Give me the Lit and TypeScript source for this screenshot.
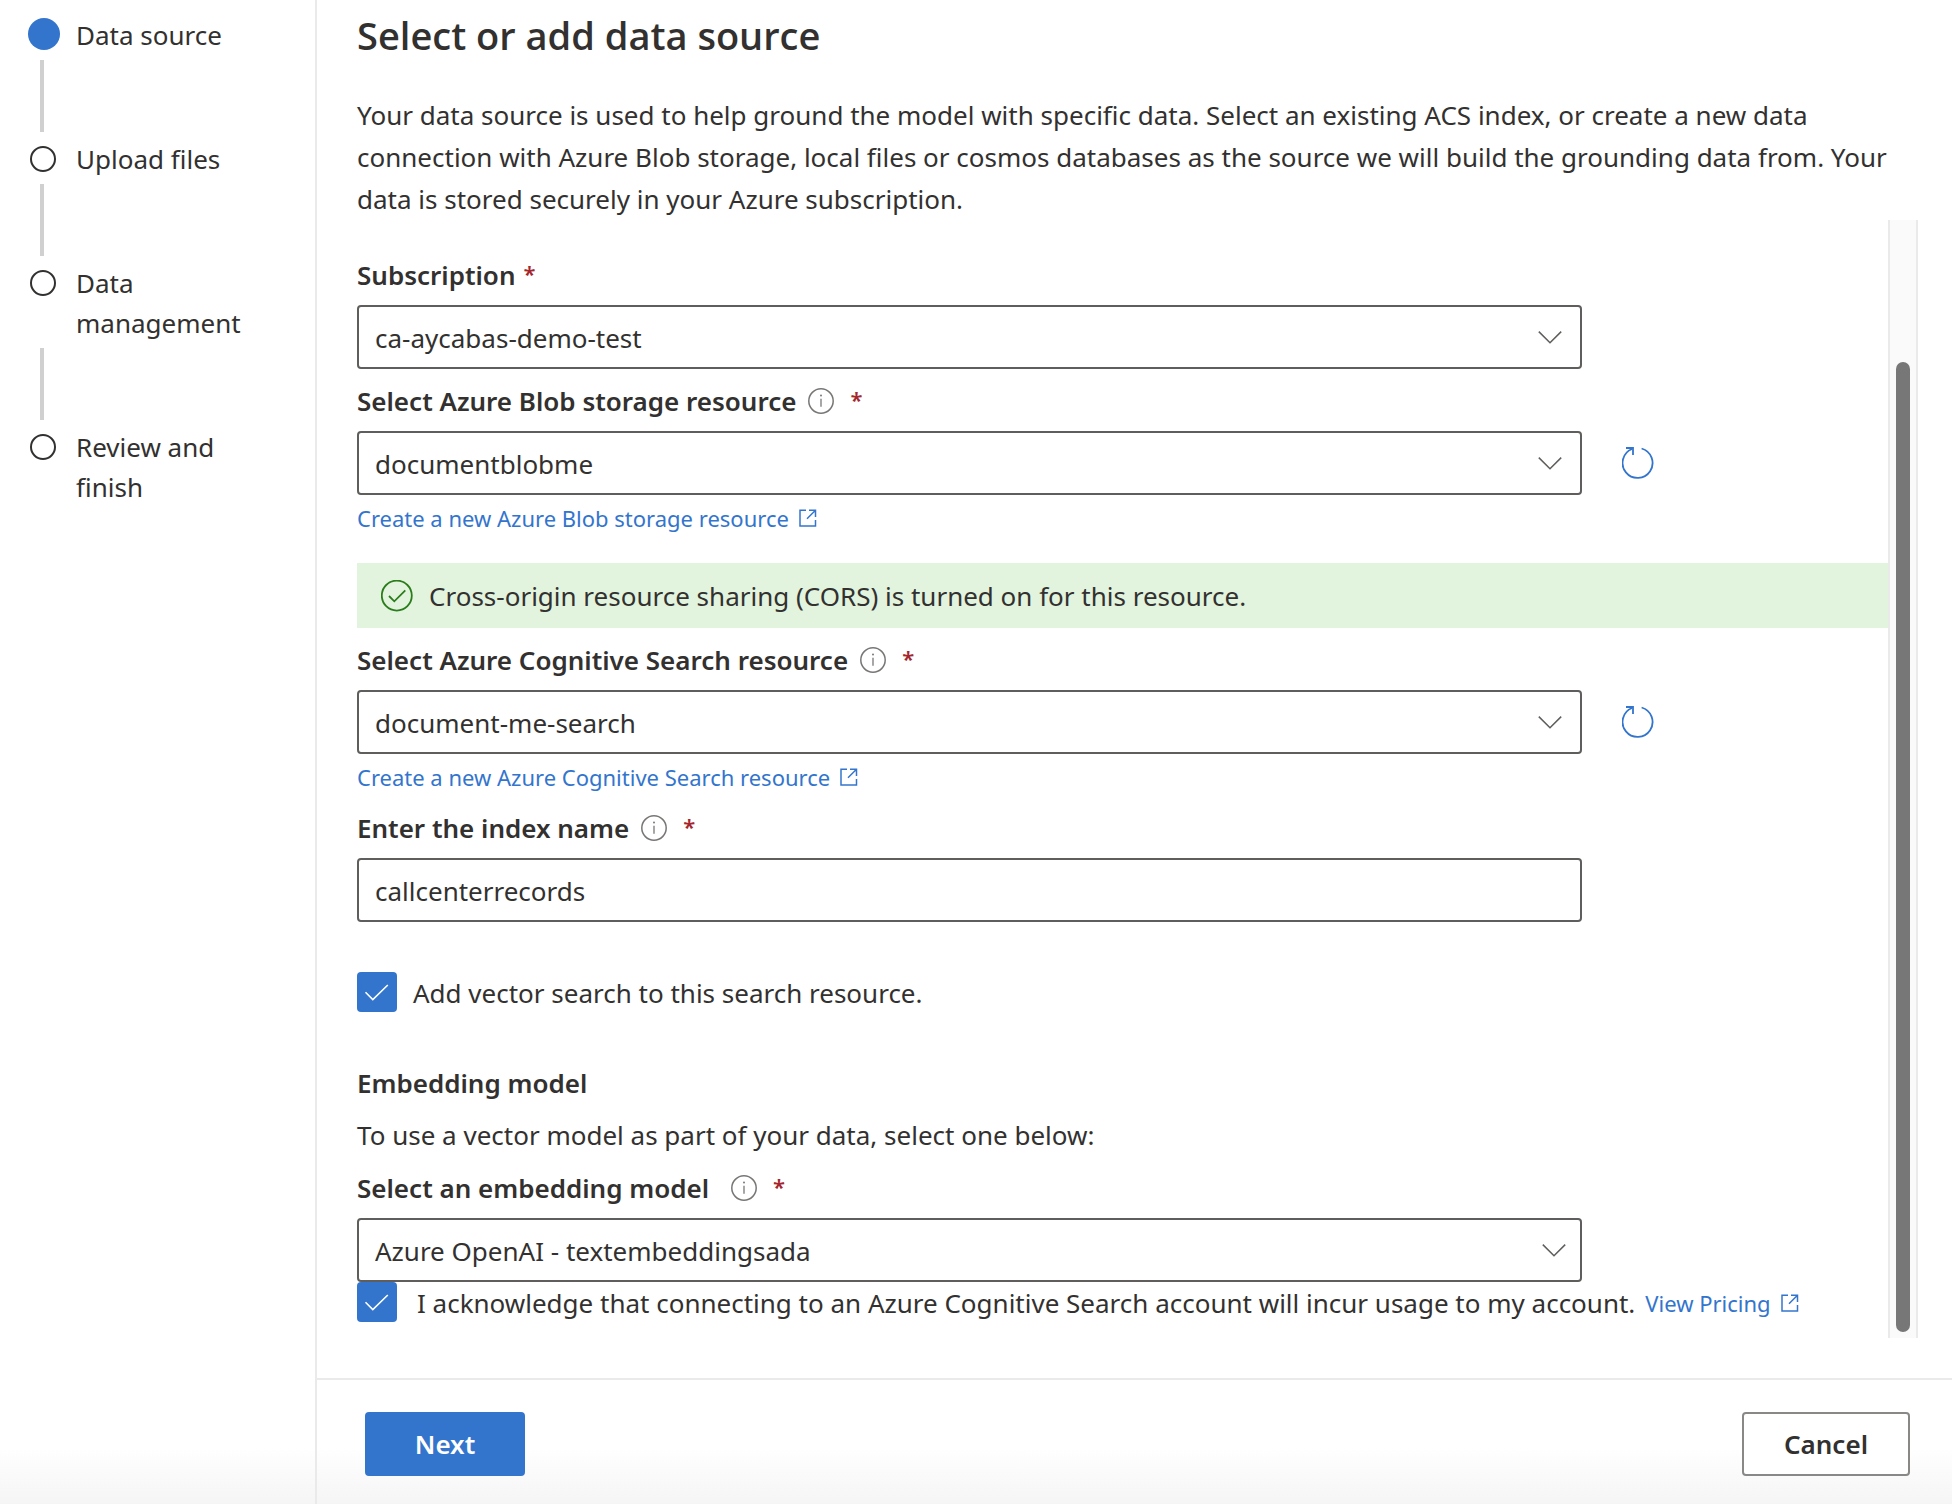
import { LitElement, html, css, nothing } from "lit";
import { customElement } from "lit/decorators.js";

const infoIcon = html`<svg class="info" viewBox="0 0 26 26" aria-hidden="true">
  <circle cx="13" cy="13" r="12.2" fill="none" stroke="#797775" stroke-width="1.5" />
  <path d="M13 10.8V18.8" stroke="#797775" stroke-width="1.3" />
  <circle cx="13" cy="7.6" r="1" fill="#797775" />
</svg>`;

const externalIcon = html`<svg class="external" viewBox="0 0 18 18" aria-hidden="true">
  <path d="M7 1.3H1V17H16.5V11M10 1.3H16.5V8M16.5 1.3L8 9.8" fill="none" stroke="currentColor" stroke-width="1.5" />
</svg>`;

const chevronIcon = (modifier: string) => html`<svg class="chevron ${modifier}" viewBox="0 0 24 13" aria-hidden="true">
  <path d="M.8 .6L12 11.8L23.2 .6" fill="none" stroke="#605e5c" stroke-width="1.5" />
</svg>`;

const refreshIcon = html`<svg class="refresh-icon" viewBox="0 0 32 32" aria-hidden="true">
  <path d="M20.2 1.5A15 15 0 1 1 10.6 2" fill="none" stroke="currentColor" stroke-width="1.8" transform="translate(-.6 0)" />
  <path d="M4 1H11V8" fill="none" stroke="currentColor" stroke-width="1.8" />
</svg>`;

const successIcon = html`<svg class="success-icon" viewBox="0 0 32 32" aria-hidden="true">
  <circle cx="15.8" cy="15.6" r="15" fill="none" stroke="#2b7d1c" stroke-width="1.8" />
  <path d="M8 16L13.3 21.3L24.3 10.3" fill="none" stroke="#2b7d1c" stroke-width="1.8" />
</svg>`;

const tickIcon = html`<svg class="tick" viewBox="0 0 40 40" aria-hidden="true">
  <path d="M8.5 20.3L15.8 27.6L30.8 13" fill="none" stroke="#fff" stroke-width="1.6" />
</svg>`;

interface FieldSpec {
  id: string;
  label: string;
  value: string;
  info?: boolean;
  refresh?: boolean;
  link?: string;
  wide?: boolean;
}

const steps = ["Data source", "Upload files", "Data management", "Review and finish"];

@customElement("app-root")
export class AppRoot extends LitElement {
  static styles = css`
    :host {
      display: block;
      font-family: "Noto Sans", "Open Sans", sans-serif;
      font-size: 26px;
      line-height: 42px;
      color: #323130;
    }
    * {
      box-sizing: border-box;
    }
    h1,
    h2,
    p,
    ol {
      margin: 0;
      padding: 0;
    }
    svg {
      display: block;
      flex: none;
    }
    .wizard {
      display: grid;
      grid-template-columns: 317px minmax(0, 1fr);
      min-height: 100vh;
      background: linear-gradient(to top, #f5f5f5, #fff 56px);
    }
    .steps {
      border-right: 2px solid #eaeaea;
      padding: 15px 48px 0 28px;
      list-style: none;
      line-height: 40px;
    }
    .step {
      display: grid;
      grid-template-columns: 32px 1fr;
      column-gap: 16px;
    }
    .dot {
      width: 26px;
      height: 26px;
      margin: 7px 2px;
      border: 2px solid #323130;
      border-radius: 50%;
    }
    .step.current .dot {
      width: 32px;
      height: 32px;
      margin: 3px 0;
      border: 0;
      background: #3375cd;
    }
    .step:not(:last-child)::after {
      content: "";
      width: 4px;
      height: 72px;
      margin: 5px 12px 7px;
      background: #d0d0d0;
    }
    .main {
      display: flex;
      flex-direction: column;
    }
    .intro {
      padding: 9px 34px 0 40px;
    }
    .title {
      font-family: "Open Sans", "Noto Sans", sans-serif;
      font-size: 38px;
      line-height: 52px;
      font-weight: 600;
      margin-bottom: 33px;
    }
    .scroll {
      flex: 1;
      display: flex;
      margin: 0 34px 40px 40px;
    }
    .form {
      flex: 1;
      min-width: 0;
      padding-top: 23px;
    }
    .track {
      display: flex;
      width: 30px;
      padding: 142px 6px 6px;
      border: solid #eaeaea;
      border-width: 0 2px;
      background: #fafafa;
    }
    .thumb {
      flex: 1;
      border-radius: 7px;
      background: #777;
    }
    .label-row {
      display: flex;
      align-items: center;
      gap: 8px;
      padding: 11px 0 9px;
      font-weight: 600;
    }
    .info {
      width: 26px;
      height: 26px;
      margin: 0 8px 0 4px;
    }
    .wide .info {
      margin-left: 14px;
    }
    .required {
      align-self: flex-start;
      color: #a4262c;
      font-size: 22px;
      line-height: 38px;
    }
    .control-row {
      display: flex;
      align-items: center;
      gap: 40px;
    }
    .box {
      display: grid;
      flex: 0 0 80%;
      align-items: center;
    }
    .control {
      grid-area: 1 / 1;
      appearance: none;
      width: 100%;
      height: 64px;
      margin: 0;
      padding: 2px 60px 0 16px;
      border: 2px solid #605e5c;
      border-radius: 4px;
      background: #fff;
      color: inherit;
      font: inherit;
    }
    .chevron {
      grid-area: 1 / 1;
      justify-self: end;
      width: 24px;
      height: 13px;
      margin: 0 20px 0 0;
      pointer-events: none;
    }
    .chevron.wide {
      margin-right: 16px;
    }
    .refresh {
      padding: 0;
      border: 0;
      background: none;
      color: #3375cd;
    }
    .refresh-icon,
    .success-icon {
      width: 32px;
      height: 32px;
    }
    .link {
      display: flex;
      align-items: center;
      gap: 10px;
      width: fit-content;
      color: #3375cd;
      font-size: 22px;
      text-decoration: none;
    }
    .control-row + .link {
      padding-top: 4px;
      line-height: 38px;
    }
    .external {
      width: 18px;
      height: 18px;
    }
    .banner {
      display: flex;
      align-items: center;
      gap: 16px;
      height: 65px;
      margin-top: 26px;
      padding-left: 24px;
      background: #e2f4de;
    }
    .check-row {
      display: flex;
      align-items: flex-start;
      gap: 16px;
      height: 42px;
    }
    .check {
      display: grid;
      flex: none;
    }
    .checkbox {
      grid-area: 1 / 1;
      appearance: none;
      width: 40px;
      height: 40px;
      margin: 0;
      border-radius: 4px;
      background: #3375cd;
    }
    .tick {
      grid-area: 1 / 1;
      width: 40px;
      height: 40px;
      pointer-events: none;
    }
    .vector {
      margin: 50px 0 48px;
    }
    .ack {
      column-gap: 10px;
    }
    .ack label {
      padding-left: 10px;
    }
    .subtitle {
      font-size: 26px;
      line-height: 42px;
      font-weight: 600;
      margin-bottom: 10px;
    }
    .footer {
      display: flex;
      justify-content: space-between;
      padding: 32px 42px 28px 48px;
      border-top: 2px solid #eaeaea;
    }
    .button {
      height: 64px;
      padding: 0 40px;
      border: 2px solid #8a8886;
      border-radius: 4px;
      background: #fff;
      color: inherit;
      font: inherit;
      font-weight: 600;
    }
    .button.primary {
      min-width: 160px;
      border-color: #3375cd;
      background: #3375cd;
      color: #fff;
    }
  `;

  private label(f: FieldSpec) {
    return html`<div class="label-row ${f.wide ? "wide" : ""}">
      <label for=${f.id}>${f.label}</label>${f.info ? infoIcon : nothing}<span class="required">*</span>
    </div>`;
  }

  private dropdown(f: FieldSpec) {
    return html`${this.label(f)}
      <div class="control-row">
        <div class="box">
          <select class="control" id=${f.id}>
            <option selected>${f.value}</option>
          </select>
          ${chevronIcon(f.wide ? "wide" : "")}
        </div>
        ${f.refresh
          ? html`<button class="refresh" type="button" aria-label="Refresh">${refreshIcon}</button>`
          : nothing}
      </div>
      ${f.link ? html`<a class="link" href="#">${f.link}${externalIcon}</a>` : nothing}`;
  }

  private textbox(f: FieldSpec) {
    return html`${this.label(f)}
      <div class="control-row">
        <div class="box"><input class="control" id=${f.id} type="text" .value=${f.value} /></div>
      </div>`;
  }

  private checkbox(id: string) {
    return html`<span class="check"><input class="checkbox" id=${id} type="checkbox" checked />${tickIcon}</span>`;
  }

  render() {
    return html`<div class="wizard">
      <ol class="steps">
        ${steps.map(
          (name, i) => html`<li class="step ${i === 0 ? "current" : ""}"><span class="dot"></span><span>${name}</span></li>`
        )}
      </ol>
      <main class="main">
        <header class="intro">
          <h1 class="title">Select or add data source</h1>
          <p>
            Your data source is used to help ground the model with specific data. Select an existing ACS index, or
            create a new data connection with Azure Blob storage, local files or cosmos databases as the source we will
            build the grounding data from. Your data is stored securely in your Azure subscription.
          </p>
        </header>
        <div class="scroll">
          <form class="form">
            ${this.dropdown({ id: "subscription", label: "Subscription", value: "ca-aycabas-demo-test" })}
            ${this.dropdown({
              id: "blob",
              label: "Select Azure Blob storage resource",
              value: "documentblobme",
              info: true,
              refresh: true,
              link: "Create a new Azure Blob storage resource",
            })}
            <div class="banner" role="status">
              ${successIcon}<span>Cross-origin resource sharing (CORS) is turned on for this resource.</span>
            </div>
            ${this.dropdown({
              id: "search",
              label: "Select Azure Cognitive Search resource",
              value: "document-me-search",
              info: true,
              refresh: true,
              link: "Create a new Azure Cognitive Search resource",
            })}
            ${this.textbox({ id: "index", label: "Enter the index name", value: "callcenterrecords", info: true })}
            <div class="check-row vector">
              ${this.checkbox("vector")}<label for="vector">Add vector search to this search resource.</label>
            </div>
            <h2 class="subtitle">Embedding model</h2>
            <p>To use a vector model as part of your data, select one below:</p>
            ${this.dropdown({
              id: "embedding",
              label: "Select an embedding model",
              value: "Azure OpenAI - textembeddingsada",
              info: true,
              wide: true,
            })}
            <div class="check-row ack">
              ${this.checkbox("ack")}<label for="ack"
                >I acknowledge that connecting to an Azure Cognitive Search account will incur usage to my
                account.</label
              >
              <a class="link" href="#">View Pricing${externalIcon}</a>
            </div>
          </form>
          <div class="track"><div class="thumb"></div></div>
        </div>
        <footer class="footer">
          <button class="button primary" type="button">Next</button>
          <button class="button" type="button">Cancel</button>
        </footer>
      </main>
    </div>`;
  }
}
